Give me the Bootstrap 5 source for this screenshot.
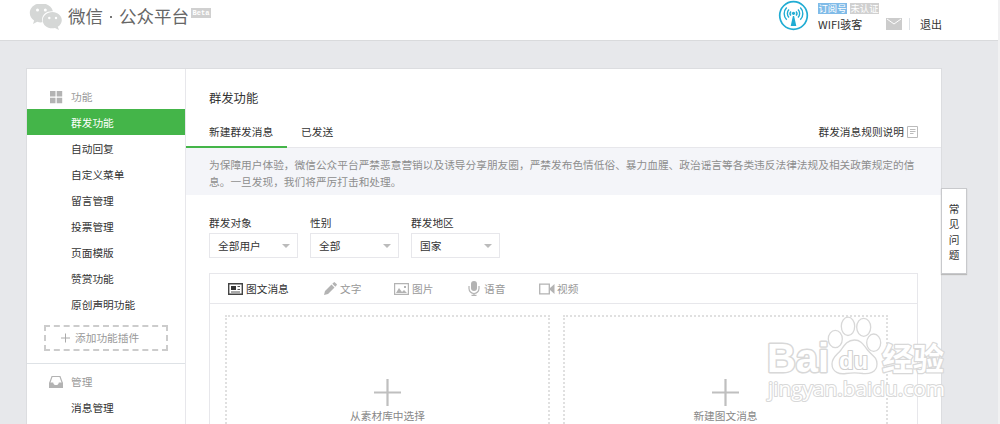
<!DOCTYPE html>
<html lang="zh-CN">
<head>
<meta charset="utf-8">
<meta name="viewport" content="width=device-width, initial-scale=1">
<title>微信公众平台</title>
<link href="https://cdn.jsdelivr.net/npm/bootstrap@5.3.0/dist/css/bootstrap.min.css" rel="stylesheet">
<style>
html{overflow:hidden}
body{height:424px;overflow:hidden;background:#e7e8eb;color:#333;font-family:"Noto Sans CJK SC",sans-serif;font-size:10.7px;line-height:16px;border-right:2px solid #f1f1f2;position:relative}
svg{display:block;flex:none}
a{color:inherit;text-decoration:none}
.topbar{height:41px;background:#fff;border-bottom:1px solid #d9dadc;padding-left:29px}
.brand-name{font-size:17.5px;line-height:24px;color:#666;margin:4px 0 0 5px;white-space:nowrap;width:121px}
.brand-dot{display:inline-block;width:2px;height:2px;background:#777;margin:0 7px 5px}
.beta{width:20px;height:10px;margin:8px 0 0 2px;background:#d0d0d0;color:#fff;font:bold 7px/10px "Liberation Mono",monospace;text-align:center}
.account{width:220px}
.acct-tag{height:11px;width:29px;line-height:11px;font-size:9.3px;color:#fff;text-align:center;white-space:nowrap}
.tag-blue{background:#80bbe8}.tag-gray{background:#d0d0d0}
.page-shell{width:916px;height:357px;margin:27px 0 0 26px;background:#fff;border:1px solid #dcdde0;border-bottom:0}
.side{width:159px;border-right:1px solid #e7e7eb;padding-top:15px}
.side-title{height:25px;padding-left:22px;color:#999}
.side-title span{margin-left:8px}
.side-link{display:block;height:26px;line-height:27px;padding-left:44px;color:#333}
.side-link.active{background:#44b549;color:#fff}
.plugin{margin:8px 0 12px 17px;width:124px;height:26px;border:2px dashed #ccc;color:#999;padding-left:15px}
.main-title{font-size:12.3px;line-height:20px;margin:19px 0 0 23px}
.tabs-row{height:31px;margin-top:9px;border-bottom:1px solid #e7e7eb}
.tab-on{width:101px;padding-left:23px;height:31px;line-height:29px;border-bottom:2px solid #44b549}
.tab-off{line-height:29px;margin-left:14px}
.notice{height:47px;background:#f4f5f9;color:#8d8d8d;padding:8px 0 0 23px;line-height:17px;white-space:nowrap}
.filters{margin:20px 0 0 23px;gap:12px}
.pick{width:89px;height:25px;border:1px solid #e7e7eb;background:#fff;padding:0 7px 0 8px;margin-top:2px;color:#333;font-size:10.7px}
.caret{border:4px solid transparent;border-top-color:#bbb;border-bottom:0}
.editor{margin:15px 23px 0 23px;border:1px solid #e7e7eb;border-bottom:0;height:160px}
.media-tabs{height:30px;border-bottom:1px solid #e7e7eb;color:#999}
.media{white-space:nowrap}
.choices{padding:11px 0 0 15px;gap:13px}
.choice{width:325px;height:120px;border:2px dotted #e0e0e0;padding-top:62px;color:#888}
.faq{left:941px;top:188px;width:26px;height:86px;background:#fff;border:1px solid #c8c9cc;box-shadow:0 1px 1px #bbb;line-height:15.3px;padding-top:12px;text-align:center}
.watermark{left:760px;top:310px}
</style>
</head>
<body>
<header class="topbar d-flex justify-content-between">
 <div class="d-flex">
  <svg class="mt-1" width="34" height="27" viewBox="0 0 34 27"><path fill="#d5d7d6" d="M12.500 -.7C5.800-.7.800 3.400.800 9c0 3.300 1.700 5.800 4.300 7.500L4 20l4.200-2.200c1.500.5 3 .7 5.300.5-2-6.800 3.500-11.500 10.400-11C22.700 2.500 18.200-.7 12.500-.7z"/><path fill="#d5d7d6" d="M23.500 8c-5.500 0-9.700 3.700-9.700 8.200 0 5.500 5.500 9.200 12.200 7.800l4 2-1.200-3.300c2.600-1.700 4-3.900 4-6.500 0-4.500-4.200-8.200-9.300-8.200z"/><g fill="#fff"><circle cx="8.500" cy="6" r="1.500"/><circle cx="16.300" cy="6" r="1.500"/><circle cx="20.300" cy="14" r="1.200"/><circle cx="27" cy="14" r="1.200"/></g></svg>
  <div class="brand-name">微信<i class="brand-dot"></i>公众平台</div><span class="beta">Beta</span>
 </div>
 <div class="account d-flex">
  <svg width="31" height="31" viewBox="0 0 31 31" fill="none" stroke="#20acd3"><circle cx="15.500" cy="15.500" r="13.800" stroke-width="1.700"/><path stroke-width="1.400" d="M8.700 19.800a8.800 8.800 0 0 1 0-12.300M22.300 19.800a8.800 8.800 0 0 0 0-12.300M11 17.600a5.700 5.700 0 0 1 0-8M20 17.600a5.700 5.700 0 0 0 0-8M13 15.600a3 3 0 0 1 0-4.200M18 15.600a3 3 0 0 0 0-4.200"/><circle cx="15.500" cy="13.300" r="1.600" fill="#20acd3" stroke="none"/><path fill="#20acd3" stroke="none" d="M14.900 16h1.200l2.200 10h-5.600z"/></svg>
  <div style="margin-left:9px">
   <div class="d-flex" style="gap:3px;margin-top:3px"><span class="acct-tag tag-blue">订阅号</span><span class="acct-tag tag-gray">未认证</span></div>
   <div class="d-flex align-items-center" style="margin-top:2px;font-size:11px"><span style="width:68px">WIFI骇客</span><svg width="16" height="12" viewBox="0 0 16 12"><path fill="#ccc" d="M0 0h16v12H0z"/><path d="m1 1 7 5 7-5" fill="none" stroke="#fff"/></svg><span class="border-start" style="height:12px;margin-left:7px"></span><a href="#" style="margin-left:10px">退出</a></div>
  </div>
 </div>
</header>
<div class="page-shell d-flex">
 <nav class="side flex-shrink-0">
  <div class="side-title d-flex align-items-center"><svg width="14" height="14" viewBox="0 0 14 14" fill="#b3b3b3"><path d="M1 1h5.500v5.500H1zM7.700 1h5.500v5.500H7.700zM1 7.700h5.500v5.500H1zM7.700 7.700h5.500v5.500H7.700z"/></svg><span>功能</span></div>
  <a class="side-link active" href="#">群发功能</a><a class="side-link" href="#">自动回复</a><a class="side-link" href="#">自定义菜单</a><a class="side-link" href="#">留言管理</a><a class="side-link" href="#">投票管理</a><a class="side-link" href="#">页面模版</a><a class="side-link" href="#">赞赏功能</a><a class="side-link" href="#">原创声明功能</a>
  <div class="plugin d-flex align-items-center"><svg width="9" height="10" viewBox="0 0 9 10" stroke="#aaa"><path d="M0 5h9M4.500.5v9"/></svg><span style="margin-left:5px">添加功能插件</span></div>
  <div class="border-top" style="padding-top:5px">
   <div class="side-title d-flex align-items-center"><svg width="14" height="14" viewBox="0 0 14 14"><path d="M.700 8 3 1.500h8L13.300 8" fill="none" stroke="#b3b3b3" stroke-width="1.200"/><path fill="#b3b3b3" d="M0 7.500h4.200c0 3.400 5.600 3.400 5.600 0H14V13H0z"/></svg><span>管理</span></div>
   <a class="side-link" href="#">消息管理</a>
  </div>
 </nav>
 <main class="flex-grow-1">
  <h1 class="main-title fw-normal mb-0">群发功能</h1>
  <div class="tabs-row d-flex"><a class="tab-on" href="#">新建群发消息</a><a class="tab-off" href="#">已发送</a>
   <a class="ms-auto d-flex align-items-center" href="#" style="margin-right:23px">群发消息规则说明<svg style="margin-left:3px" width="11" height="12" viewBox="0 0 11 12" fill="none" stroke="#bbb"><path d="M.5.500h10v11H.5zM3 3.500h5.500M3 5.500h5.500M3 7.500h3.500"/></svg></a></div>
  <div class="notice">为保障用户体验，微信公众平台严禁恶意营销以及诱导分享朋友圈，严禁发布色情低俗、暴力血腥、政治谣言等各类违反法律法规及相关政策规定的信<br>息。一旦发现，我们将严厉打击和处理。</div>
  <div class="filters d-flex">
   <div>群发对象<button class="pick d-flex align-items-center justify-content-between">全部用户<i class="caret"></i></button></div>
   <div>性别<button class="pick d-flex align-items-center justify-content-between">全部<i class="caret"></i></button></div>
   <div>群发地区<button class="pick d-flex align-items-center justify-content-between">国家<i class="caret"></i></button></div>
  </div>
  <section class="editor">
   <div class="media-tabs d-flex align-items-center">
    <a class="media d-flex align-items-center" href="#" style="margin-left:18px;width:95px;gap:3px;color:#333"><svg width="15" height="12" viewBox="0 0 15 12"><path d="M.700.700h13.600v10.600H.7z" fill="none" stroke="#444" stroke-width="1.400"/><path fill="#333" d="M3 3h5v4H3z"/><path stroke="#555" d="M9.500 3.500h2.500M9.500 6.500h2.500M3 9h9"/></svg>图文消息</a>
    <a class="media d-flex align-items-center" href="#" style="width:71px;gap:3px"><svg width="14" height="14" viewBox="0 0 14 14" fill="#b3b3b3"><path d="m1 13 1-4 6.500-6.500 3 3L5 12zM9.300 1.700 10.700.4q.6-.6 1.200 0l1.700 1.700q.6.600 0 1.200l-1.300 1.400z"/></svg>文字</a>
    <a class="media d-flex align-items-center" href="#" style="width:74px;gap:3px"><svg width="15" height="12" viewBox="0 0 15 12"><path d="M.600.600h13.800v10.800H.6z" fill="none" stroke="#b3b3b3" stroke-width="1.200"/><path fill="#b3b3b3" d="m2 10 3-5 3 4 2-2 3 3zM10 3h2v2h-2z"/></svg>图片</a>
    <a class="media d-flex align-items-center" href="#" style="width:71px;gap:4px"><svg width="12" height="15" viewBox="0 0 12 15"><rect x="3" width="6" height="10" rx="3" fill="#b3b3b3"/><path d="M1 5v2.500a5 5 0 0 0 10 0V5M6 12.500V14M3.500 14.300h5" fill="none" stroke="#b3b3b3" stroke-width="1.200"/></svg>语音</a>
    <a class="media d-flex align-items-center" href="#" style="gap:2px"><svg width="16" height="12" viewBox="0 0 16 12"><path d="M.700 1.200h9.600v9.600H.7z" fill="none" stroke="#b3b3b3" stroke-width="1.300"/><path fill="#b3b3b3" d="m11 5 4.500-4v10L11 7z"/></svg>视频</a>
   </div>
   <div class="choices d-flex">
    <a class="choice d-flex flex-column align-items-center" href="#"><svg width="27" height="27" stroke="#bfbfbf" stroke-width="2.200"><path d="M0 13.500h27M13.500 0v27"/></svg><span style="margin-top:2px">从素材库中选择</span></a>
    <a class="choice d-flex flex-column align-items-center" href="#"><svg width="27" height="27" stroke="#bfbfbf" stroke-width="2.200"><path d="M0 13.500h27M13.500 0v27"/></svg><span style="margin-top:2px">新建图文消息</span></a>
   </div>
  </section>
 </main>
</div>
<aside class="faq position-absolute">常<br>见<br>问<br>题</aside>
<svg class="watermark position-absolute" width="200" height="100" viewBox="760 310 200 100" fill="#fff" stroke="#d8d8d8" stroke-width="1.300" stroke-linejoin="round">
 <text x="767" y="372" font-family="Liberation Sans, sans-serif" font-weight="bold" font-size="40" textLength="62" lengthAdjust="spacingAndGlyphs" paint-order="stroke" stroke-width="3">Bai</text>
 <ellipse cx="835.300" cy="339" rx="7" ry="8.700"/><ellipse cx="848" cy="326.300" rx="6.700" ry="9.200"/><ellipse cx="863.700" cy="327.300" rx="7" ry="9"/><ellipse cx="873.700" cy="342.700" rx="7" ry="8.700"/>
 <path d="M854.500 340c7 0 9 5 13 10 5 6 9.500 7 9.500 14 0 9-9 10-14 9.500-6-1-11-1-17 0-6 1-14-1-14-9.500 0-7 5-9 9-14 4-6 7-10 13.500-10z"/>
 <text x="839" y="368.500" font-family="Liberation Sans, sans-serif" font-weight="bold" font-size="24" textLength="29" lengthAdjust="spacingAndGlyphs" stroke="#d0d0d0" stroke-width="2.200" paint-order="stroke">du</text>
 <text x="882" y="370" font-family="Noto Sans CJK SC, sans-serif" font-weight="bold" font-size="31" textLength="62" stroke-width="2.500" paint-order="stroke">经验</text>
 <text x="768" y="396" font-family="Open Sans, sans-serif" font-size="20" textLength="177" lengthAdjust="spacingAndGlyphs" stroke-width="2" paint-order="stroke">jingyan.baidu.com</text>
</svg>
<script src="https://cdn.jsdelivr.net/npm/bootstrap@5.3.0/dist/js/bootstrap.bundle.min.js"></script>
</body>
</html>
